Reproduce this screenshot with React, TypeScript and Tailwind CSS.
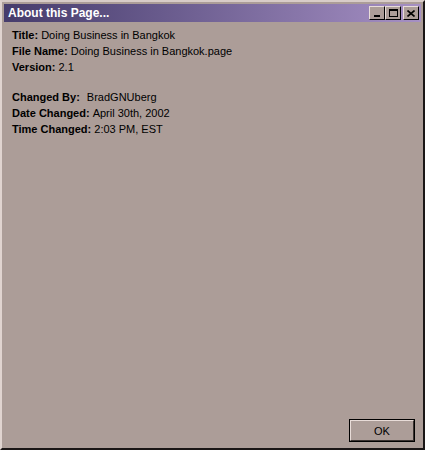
import React from "react";

const rows = [
  { label: "Title:", value: "Doing Business in Bangkok" },
  { label: "File Name:", value: "Doing Business in Bangkok.page" },
  { label: "Version:", value: "2.1" },
];

const rows2 = [
  { label: "Changed By:", value: "BradGNUberg", wide: true },
  { label: "Date Changed:", value: "April 30th, 2002" },
  { label: "Time Changed:", value: "2:03 PM, EST" },
];

function TitleButton({ children }: { children: React.ReactNode }) {
  return (
    <div className="w-[16px] h-[14px] bg-[#ac9d98] border border-t-[#e8dcd8] border-l-[#e8dcd8] border-r-black border-b-black flex items-center justify-center">
      {children}
    </div>
  );
}

export default function App() {
  return (
    <div
      className="w-[425px] h-[450px] bg-[#ac9d98] border-2 border-t-[#d8ccc8] border-l-[#e0d4d0] border-r-[#1a1616] border-b-[#1a1616] flex flex-col p-[2px] text-black"
      style={{ fontFamily: "'Liberation Sans', Arial, sans-serif" }}
    >
      {/* title bar */}
      <div className="h-[18px] bg-gradient-to-r from-[#463c6c] to-[#a690c4] flex items-center justify-between pl-[4px] pr-[2px]">
        <span className="text-white font-bold text-[12px] leading-none">About this Page...</span>
        <div className="flex items-center">
          <TitleButton>
            <div className="w-[6px] h-[2px] bg-black mt-[6px]" />
          </TitleButton>
          <TitleButton>
            <div className="w-[9px] h-[8px] border border-black border-t-2" />
          </TitleButton>
          <div className="w-[2px]" />
          <TitleButton>
            <svg width="8" height="7" viewBox="0 0 8 7">
              <path d="M0.5 0.5 L7.5 6.5 M7.5 0.5 L0.5 6.5" stroke="black" strokeWidth="1.6" />
            </svg>
          </TitleButton>
        </div>
      </div>

      {/* content */}
      <div className="flex-1 flex flex-col pl-[8px] pt-[5px] text-[11px] leading-[16px]">
        {rows.map((r) => (
          <div key={r.label}>
            <span className="font-bold">{r.label}</span> {r.value}
          </div>
        ))}
        <div className="h-[14px]" />
        {rows2.map((r) => (
          <div key={r.label} className="flex">
            <span className="font-bold">{r.label}</span>
            <span className={r.wide ? "ml-[7px]" : "ml-[3px]"}>{r.value}</span>
          </div>
        ))}
        <div className="flex-1" />
        <div className="flex justify-end pr-[6px] pb-[4px]">
          <button className="w-[66px] h-[23px] border border-black bg-[#ac9d98] p-0">
            <div className="w-full h-full border border-t-[#e8dcd8] border-l-[#e8dcd8] border-r-[#3a3230] border-b-[#3a3230] flex items-center justify-center text-[11px]">
              OK
            </div>
          </button>
        </div>
      </div>
    </div>
  );
}
